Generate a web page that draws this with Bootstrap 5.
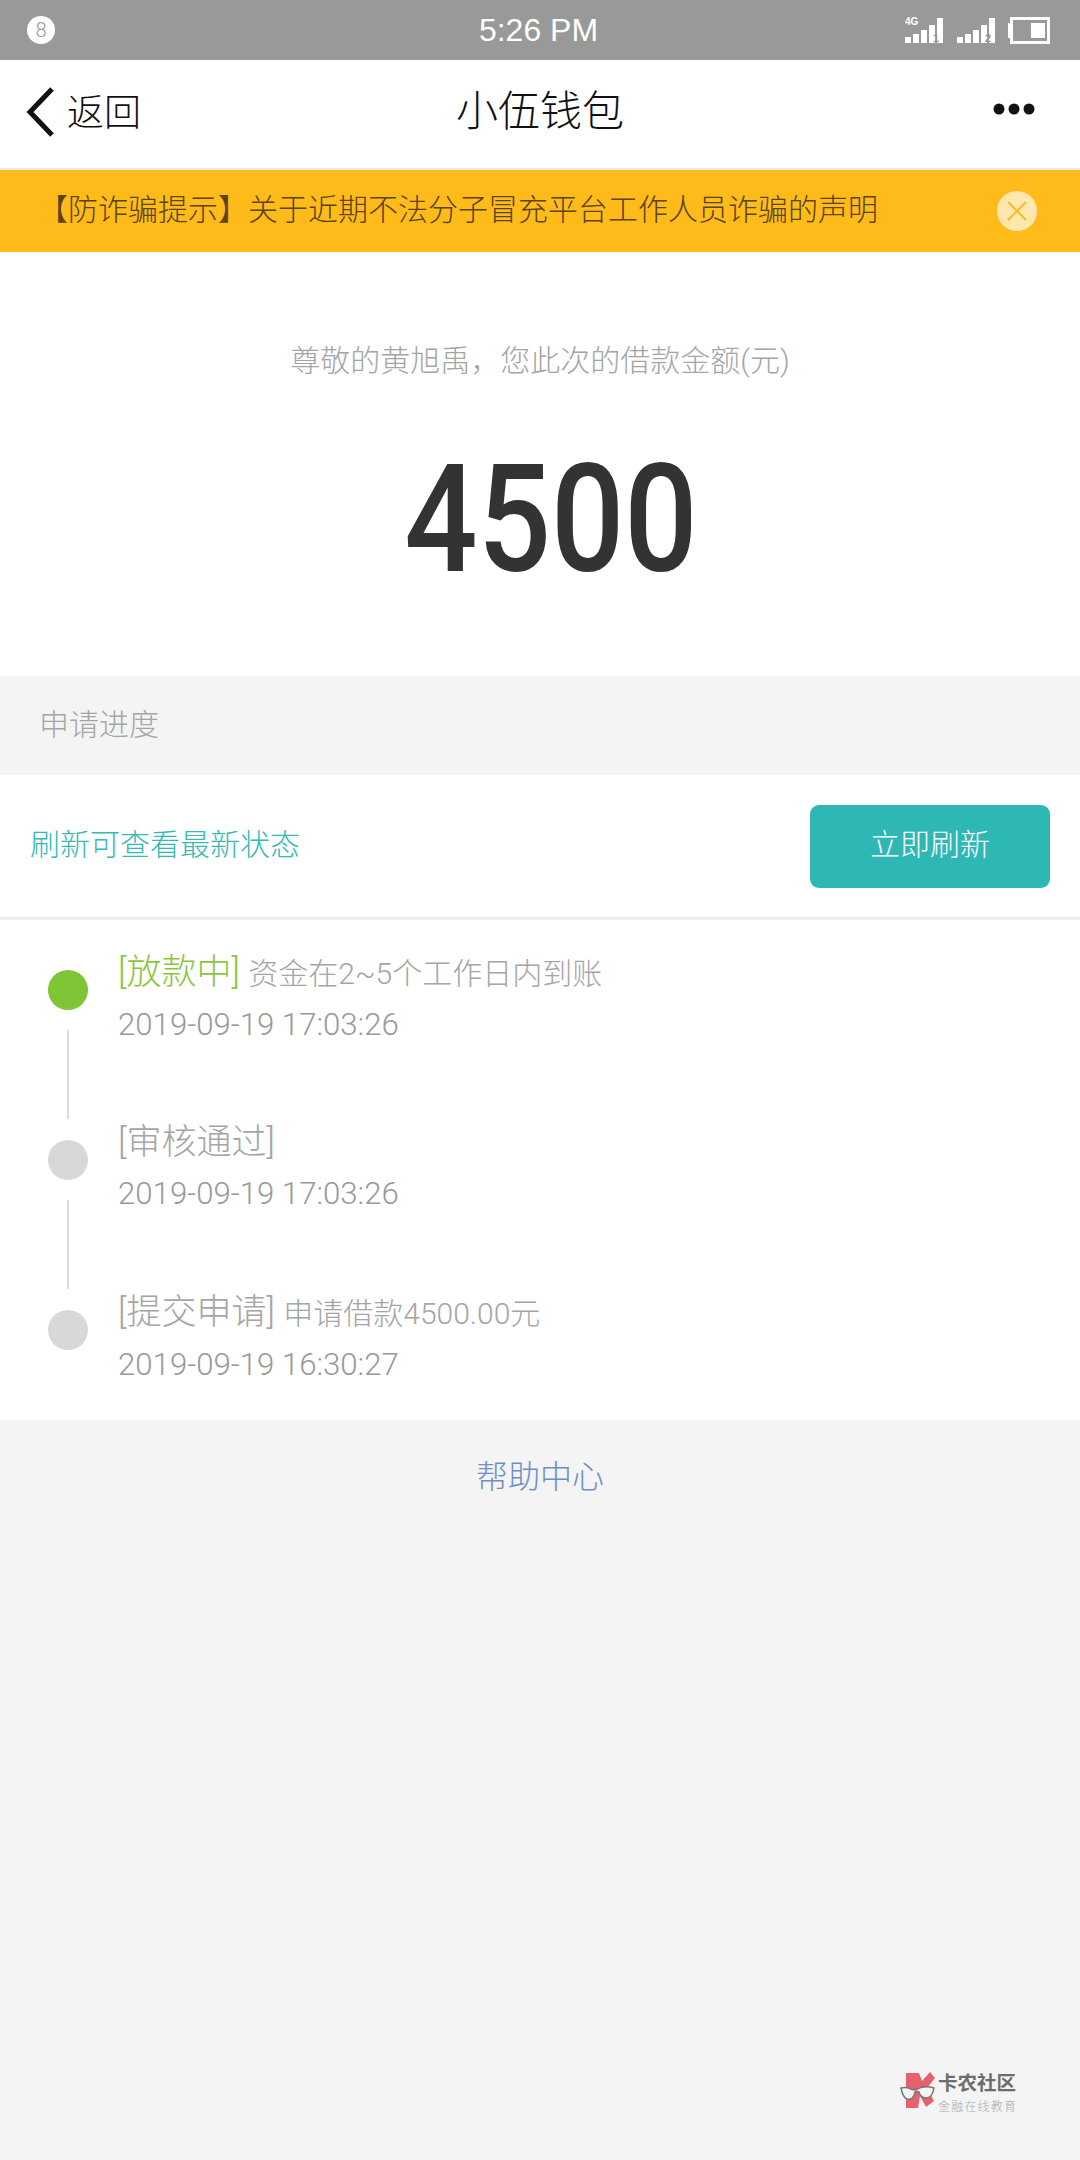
<!doctype html>
<html lang="zh-CN">
  <head>
    <meta charset="UTF-8" />
    <meta name="viewport" content="width=device-width, initial-scale=1.0" />
    <link rel="stylesheet" href="https://cdn.jsdelivr.net/npm/bootstrap@5.3.0/dist/css/bootstrap.min.css" />
    <title>小伍钱包</title>
    <style>
      body {
        background: #f4f4f4;
        font-family: Roboto, "Noto Sans CJK SC", sans-serif;
        font-weight: 300;
      }
      .page { min-height: 2160px; }
      .status-bar { height: 60px; background: #999; padding: 0 30px 0 27px; }
      .status-bar .side { flex: 1 1 0; }
      .status-num {
        width: 28px; height: 28px; border-radius: 50%; background: #fff; color: #999;
        font-size: 20px; line-height: 28px; text-align: center;
      }
      .status-time { color: #fff; font-family: "Liberation Sans", sans-serif; font-size: 32px; font-weight: 400; line-height: 1; }
      .top-bar { height: 108px; background: #fff; padding: 0 45px 10px; }
      .top-bar .side { flex: 1 1 0; }
      .back-mark { margin-left: -20px; margin-top: 6px; }
      .back-text { font-size: 37px; color: #111; margin-left: 13px; margin-top: 8px; line-height: 1; }
      .top-title { font-size: 42px; color: #111; line-height: 1; margin-top: 6px; }
      .hair { height: 2px; background: #e8e8e8; }
      .notice { height: 82px; background: #ffbb1a; padding: 0 43px 0 38px; }
      .notice-text { font-size: 30px; color: #5c4312; line-height: 1; margin-top: -2px; }
      .notice-close {
        width: 40px; height: 40px; border-radius: 50%; background: #ffe7ae;
      }
      .amount-box { height: 424px; background: #fff; padding-top: 91px; }
      .amount-hint { font-size: 30px; line-height: 36px; color: #a5a5a5; }
      .amount-num {
        font-size: 150px; font-weight: 500; line-height: 1; color: #333; margin: 66px 0 0 22px;
        transform: scaleX(0.86);
      }
      .section-head { height: 99px; padding: 0 0 3px 39px; font-size: 30px; color: #a5a5a5; }
      .refresh-row { height: 142px; background: #fff; padding: 0 30px; }
      .refresh-text { font-size: 30px; color: #36b9b4; padding-bottom: 3px; }
      .refresh-btn {
        width: 240px; height: 83px; background: #2db7b5; border: 0; border-radius: 9px;
        color: #fff; font-size: 30px; font-weight: 300; padding: 0 0 3px;
      }
      .rule { height: 3px; background: #eee; }
      .steps { background: #fff; height: 500px; padding: 29px 0 0 48px; }
      .step { height: 170px; }
      .step-rail { width: 40px; padding-top: 21px; margin-right: 30px; }
      .step-dot { width: 40px; height: 40px; border-radius: 50%; background: #d8d8d8; }
      .step-dot.on { background: #7ec636; }
      .step-line { width: 2px; height: 90px; background: #ddd; margin-top: 20px; }
      .step-title { font-size: 35px; line-height: 44px; color: #a5a5a5; padding-top: 2px; }
      .step-title.on { color: #8cc63f; }
      .step-note { font-size: 30px; color: #a5a5a5; }
      .step-time { font-size: 31.2px; line-height: 44px; color: #999; margin-top: 7px; }
      .help-link { font-size: 32px; color: #6e8fc9; line-height: 1; margin-top: 41px; text-decoration: none; }
      .logo-wrap { margin: auto 62px 45px 0; line-height: 0; }
    </style>
  </head>

  <body>
    <div class="page d-flex flex-column">
      <!-- 状态栏 -->
      <div class="status-bar d-flex align-items-center">
        <div class="side d-flex"><div class="status-num">8</div></div>
        <div class="status-time">5:26 PM</div>
        <div class="side d-flex justify-content-end align-items-center">
          <svg width="145" height="27" viewBox="0 0 145 27" fill="#fff">
            <text x="0" y="8" font-size="10" font-weight="700" font-family="Liberation Sans">4G</text>
            <rect x="0" y="20" width="6" height="6" />
            <rect x="8" y="17" width="6" height="9" />
            <rect x="16" y="13" width="6" height="13" />
            <rect x="24" y="8" width="6" height="18" />
            <rect x="32" y="1" width="6" height="25" />
            <text x="28" y="25" font-size="11" font-weight="700" fill="#999" font-family="Liberation Sans">1</text>
            <rect x="52" y="20" width="6" height="6" />
            <rect x="60" y="17" width="6" height="9" />
            <rect x="68" y="13" width="6" height="13" />
            <rect x="76" y="8" width="6" height="18" />
            <rect x="84" y="1" width="6" height="25" />
            <text x="80" y="25" font-size="11" font-weight="700" fill="#999" font-family="Liberation Sans">2</text>
            <path fill-rule="evenodd" d="M105 0h40v27h-40V21h-2V6h2zM108 3v21h34V3z" />
            <rect x="126" y="6" width="14" height="15" />
          </svg>
        </div>
      </div>

      <!-- 标题栏 -->
      <div class="top-bar d-flex align-items-center">
        <div class="side d-flex align-items-center">
          <svg class="back-mark" width="29" height="50" viewBox="0 0 29 50">
            <path d="M27 2 5 25l22 23" fill="none" stroke="#111" stroke-width="5" />
          </svg>
          <span class="back-text">返回</span>
        </div>
        <div class="top-title">小伍钱包</div>
        <div class="side d-flex justify-content-end">
          <svg width="42" height="12" viewBox="0 0 42 12" fill="#111">
            <circle cx="6" cy="6" r="5.5" /><circle cx="21" cy="6" r="5.5" /><circle cx="36" cy="6" r="5.5" />
          </svg>
        </div>
      </div>
      <div class="hair"></div>

      <!-- 防诈骗提示 -->
      <div class="notice d-flex align-items-center justify-content-between">
        <div class="notice-text">【防诈骗提示】关于近期不法分子冒充平台工作人员诈骗的声明</div>
        <div class="notice-close d-flex align-items-center justify-content-center">
          <svg width="22" height="22" viewBox="0 0 22 22">
            <path d="M2 2l18 18M20 2 2 20" stroke="#f5bd2c" stroke-width="2" fill="none" />
          </svg>
        </div>
      </div>

      <!-- 金额 -->
      <div class="amount-box text-center">
        <div class="amount-hint">尊敬的黄旭禹，您此次的借款金额(元)</div>
        <div class="amount-num">4500</div>
      </div>

      <div class="section-head d-flex align-items-center">申请进度</div>

      <div class="refresh-row d-flex align-items-center justify-content-between">
        <div class="refresh-text">刷新可查看最新状态</div>
        <button type="button" class="btn refresh-btn">立即刷新</button>
      </div>
      <div class="rule"></div>

      <!-- 进度 -->
      <div class="steps">
        <div class="step d-flex">
          <div class="step-rail d-flex flex-column align-items-center">
            <div class="step-dot on"></div>
            <div class="step-line"></div>
          </div>
          <div>
            <div class="step-title on">[放款中] <span class="step-note">资金在2~5个工作日内到账</span></div>
            <div class="step-time">2019-09-19 17:03:26</div>
          </div>
        </div>
        <div class="step d-flex">
          <div class="step-rail d-flex flex-column align-items-center">
            <div class="step-dot"></div>
            <div class="step-line"></div>
          </div>
          <div>
            <div class="step-title">[审核通过]</div>
            <div class="step-time">2019-09-19 17:03:26</div>
          </div>
        </div>
        <div class="step d-flex">
          <div class="step-rail d-flex flex-column align-items-center">
            <div class="step-dot"></div>
          </div>
          <div>
            <div class="step-title">[提交申请] <span class="step-note">申请借款4500.00元</span></div>
            <div class="step-time">2019-09-19 16:30:27</div>
          </div>
        </div>
      </div>

      <div class="text-center"><a href="#" class="help-link d-inline-block">帮助中心</a></div>

      <!-- 水印 -->
      <div class="logo-wrap align-self-end">
        <svg width="118" height="51" viewBox="0 -6 118 51">
          <path d="M6 3h13l3 8 8-9 5 6-8 10 7 13-8 6-6-11-2 12H6z" fill="#e5626c" />
          <path d="M1 18c4-1 8 0 10 1 2 1 4 1 6 0 4-2 11-3 17-1-1 6-3 10-8 10-4 0-6-2-7-6-2-1-3-1-4 0-1 6-4 8-8 7-3-1-5-6-6-11z" fill="#f4f4f4" stroke="#777" stroke-width="1.5" />
          <text x="38" y="20" font-size="19.5" font-weight="700" fill="#6d6d6d" font-family="Noto Sans CJK SC">卡农社区</text>
          <text x="38" y="41" font-size="12" fill="#aaa" font-family="Noto Sans CJK SC" letter-spacing="1.2">金融在线教育</text>
        </svg>
      </div>
    </div>

    <script src="https://cdn.jsdelivr.net/npm/bootstrap@5.3.0/dist/js/bootstrap.bundle.min.js"></script>
  </body>
</html>
